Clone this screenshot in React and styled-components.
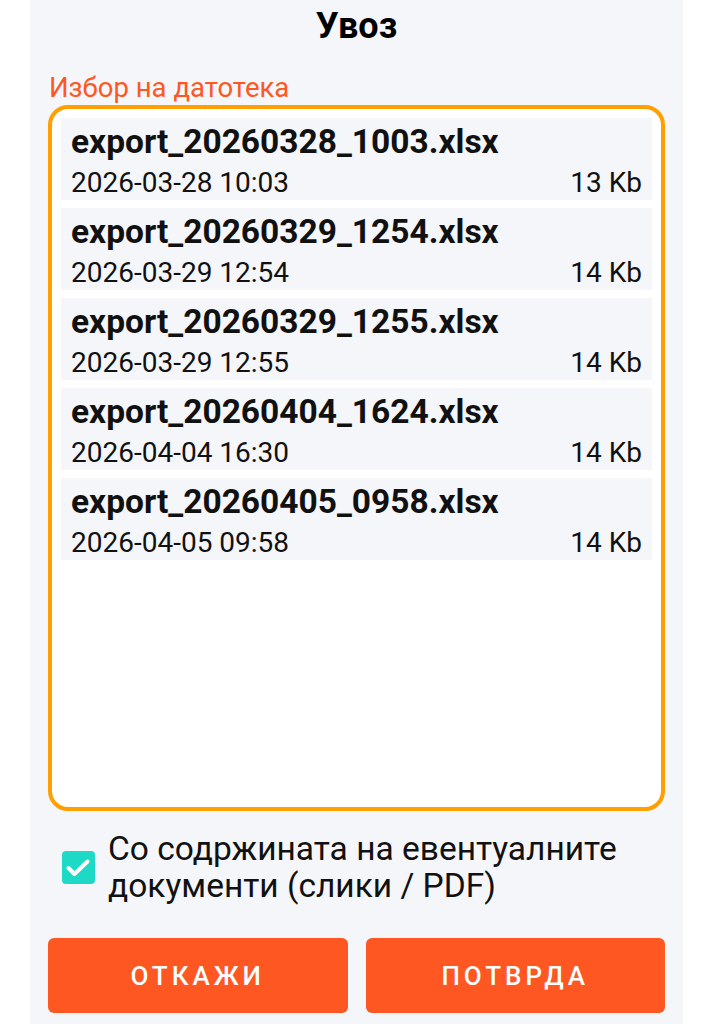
import React, { useState } from 'react'
import styled, { createGlobalStyle } from 'styled-components'

const files = [
  { name: 'export_20260328_1003.xlsx', date: '2026-03-28 10:03', size: '13 Kb' },
  { name: 'export_20260329_1254.xlsx', date: '2026-03-29 12:54', size: '14 Kb' },
  { name: 'export_20260329_1255.xlsx', date: '2026-03-29 12:55', size: '14 Kb' },
  { name: 'export_20260404_1624.xlsx', date: '2026-04-04 16:30', size: '14 Kb' },
  { name: 'export_20260405_0958.xlsx', date: '2026-04-05 09:58', size: '14 Kb' },
]

const App = () => {
  const [withDocs, setWithDocs] = useState(true)

  return (
    <>
      <GlobalStyle />
      <Page>
        <Panel>
          <Title>Увоз</Title>
          <FieldLabel>Избор на датотека</FieldLabel>
          <FileBox>
            {files.map((file) => (
              <FileItem key={file.name}>
                <FileName>{file.name}</FileName>
                <FileMeta>
                  <span>{file.date}</span>
                  <span>{file.size}</span>
                </FileMeta>
              </FileItem>
            ))}
          </FileBox>
          <CheckRow onClick={() => setWithDocs(!withDocs)}>
            <CheckBox checked={withDocs}>
              {withDocs && (
                <svg width="33" height="33" viewBox="0 0 33 33">
                  <path
                    d="M6.5 17 L12.5 23 L25.5 10.5"
                    fill="none"
                    stroke="#fff"
                    strokeWidth="4"
                    strokeLinecap="round"
                    strokeLinejoin="round"
                  />
                </svg>
              )}
            </CheckBox>
            <CheckText>Со содржината на евентуалните документи (слики / PDF)</CheckText>
          </CheckRow>
          <Buttons>
            <Button>Откажи</Button>
            <Button>Потврда</Button>
          </Buttons>
        </Panel>
      </Page>
    </>
  )
}

export default App

//style
const GlobalStyle = createGlobalStyle`
  body {
    margin: 0;
    background: #ffffff;
    font-family: Roboto, "Noto Sans", sans-serif;
  }
`

const Page = styled.div`
  display: flex;
  justify-content: center;
  min-height: 100vh;
`

const Panel = styled.div`
  width: 653px;
  box-sizing: border-box;
  padding: 5px 18px 0;
  background: #f5f6fa;
  display: flex;
  flex-direction: column;
`

const Title = styled.h1`
  margin: 0;
  text-align: center;
  font-size: 36px;
  line-height: 42px;
  font-weight: 700;
  color: #000;
`

const FieldLabel = styled.div`
  margin-top: 25px;
  padding-left: 1px;
  font-size: 27.5px;
  line-height: 32px;
  color: #ff5722;
`

const FileBox = styled.div`
  margin-top: 1px;
  height: 706px;
  box-sizing: border-box;
  border: 4px solid #ffa000;
  border-radius: 20px;
  background: #ffffff;
  padding: 9px;
  display: flex;
  flex-direction: column;
  gap: 8px;
`

const FileItem = styled.div`
  height: 82px;
  box-sizing: border-box;
  padding: 5px 10px 1px 10px;
  background: #f5f6fa;
  color: #111;
`

const FileName = styled.div`
  font-size: 33.5px;
  line-height: 38px;
  font-weight: 700;
  margin-bottom: 6px;
`

const FileMeta = styled.div`
  display: flex;
  justify-content: space-between;
  font-size: 28px;
  line-height: 32px;
`

const CheckRow = styled.label`
  margin-top: 19px;
  padding-left: 14px;
  display: flex;
  align-items: center;
  gap: 13px;
  cursor: pointer;
`

const CheckBox = styled.span`
  flex: none;
  width: 33px;
  height: 33px;
  border-radius: 4px;
  background: ${(props) => (props.checked ? '#1ed9c6' : 'transparent')};
  border: ${(props) => (props.checked ? 'none' : '3px solid #666')};
  box-sizing: border-box;
  display: flex;
`

const CheckText = styled.span`
  font-size: 33.5px;
  line-height: 37px;
  color: #111;
`

const Buttons = styled.div`
  margin-top: 34px;
  display: grid;
  grid-template-columns: 1fr 1fr;
  gap: 18px;
`

const Button = styled.button`
  height: 75px;
  border: none;
  border-radius: 6px;
  background: #ff5722;
  color: #fff;
  font-family: Roboto, sans-serif;
  font-size: 26px;
  font-weight: 500;
  letter-spacing: 4px;
  text-transform: uppercase;
  cursor: pointer;
`
